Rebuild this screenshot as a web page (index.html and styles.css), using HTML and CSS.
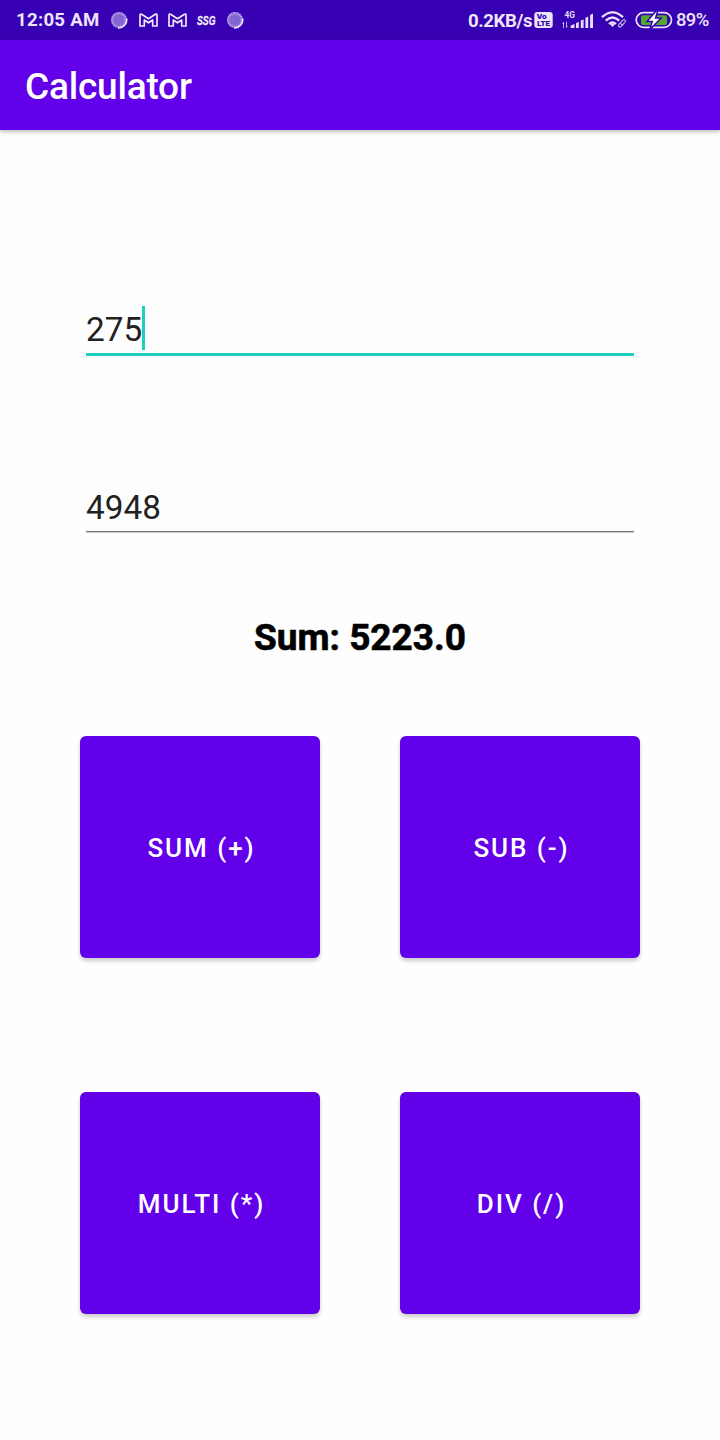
FILE: index.html
```html
<!DOCTYPE html>
<html lang="en">
<head>
<meta charset="utf-8">
<title>Calculator</title>
<link rel="stylesheet" href="styles.css">
</head>
<body>
<div class="status">
  <div class="status-left">
    <span class="clock">12:05 AM</span>
    <svg class="dot-icon" width="18" height="18" viewBox="0 0 18 18"><circle cx="9" cy="9" r="8" fill="#8264d3"/><circle cx="9" cy="9" r="6.8" fill="none" stroke="#b6a1e6" stroke-width="2.4" stroke-dasharray="1.2 .94"/><path d="M16.6 7.5A8 8 0 0 1 8 16.9" fill="none" stroke="#f0eafa" stroke-width="1.5"/></svg>
    <svg class="mail-icon" width="19" height="14" viewBox="0 0 19 14"><path d="M1 13V2.4Q1 .3 3 1.5L9.5 5.7L16 1.5Q18 .3 18 2.4V13H13.7V7L9.5 9.8L5.3 7V13Z" fill="none" stroke="#f0e9fb" stroke-width="1.7" stroke-linejoin="round"/></svg>
    <svg class="mail-icon second" width="19" height="14" viewBox="0 0 19 14"><path d="M1 13V2.4Q1 .3 3 1.5L9.5 5.7L16 1.5Q18 .3 18 2.4V13H13.7V7L9.5 9.8L5.3 7V13Z" fill="none" stroke="#f0e9fb" stroke-width="1.7" stroke-linejoin="round"/></svg>
    <svg class="ssg-icon" width="22" height="20" viewBox="0 0 22 20"><text x="1" y="14.8" class="ssg-text" textLength="18.5" lengthAdjust="spacingAndGlyphs">SSG</text></svg>
    <svg class="dot-icon last" width="18" height="18" viewBox="0 0 18 18"><circle cx="9" cy="9" r="8" fill="#8264d3"/><circle cx="9" cy="9" r="6.8" fill="none" stroke="#b6a1e6" stroke-width="2.4" stroke-dasharray="1.2 .94"/><path d="M16.6 7.5A8 8 0 0 1 8 16.9" fill="none" stroke="#f0eafa" stroke-width="1.5"/></svg>
  </div>
  <div class="status-right">
    <span class="speed">0.2KB/s</span>
    <svg class="volte" width="19" height="16" viewBox="0 0 19 16"><rect x=".3" width="18.4" height="16" rx="3" fill="#ebe4f8"/><text x="2.8" y="7.4" class="volte-text" textLength="10" lengthAdjust="spacingAndGlyphs">Vo</text><text x="3" y="14.4" class="volte-text" textLength="13" lengthAdjust="spacingAndGlyphs">LTE</text></svg>
    <svg class="signal" width="32" height="18" viewBox="0 0 32 18"><text x="2.5" y="7" class="net-text" textLength="10.5" lengthAdjust="spacingAndGlyphs">4G</text><g fill="#e7def7"><path d="M1.2 17V13H.2L2 10.8V17ZM5 10.8V15H6L4.2 17V10.8Z"/><path d="M8.7 17V14.5L12.5 13V17ZM14 12.2L16.8 10.8V17H14ZM18.8 9.6L21.6 8.4V17H18.8ZM23.4 6.8L26.2 5.5V17H23.4ZM28.1 4L31 2.6V17H28.1Z"/></g></svg>
    <svg class="wifi" width="26" height="18" viewBox="0 0 26 18"><g fill="none" stroke="#eae2f8" stroke-width="2.3"><path d="M1 6.2Q11.5-3.5 22 6.2"/><path d="M4.7 9.7Q11.5 3.3 18.3 9.7"/><path d="M8 13Q11.5 9.7 15 13"/></g><path d="M9 13.2Q11.5 11.5 14 13.2L11.5 16Z" fill="#eae2f8"/><g fill="#3700b3" stroke="#c5b3eb" stroke-width="1.1"><rect x="17" y="12.1" width="5.5" height="3" rx="1.5" transform="rotate(-45 19.7 13.6)"/><rect x="19.3" y="9.7" width="5.5" height="3" rx="1.5" transform="rotate(-45 22 11.2)"/></g></svg>
    <svg class="battery" width="38" height="18" viewBox="0 0 38 18"><rect x="1.2" y="1.7" width="35.3" height="14.6" rx="7.3" fill="none" stroke="#e8dff8" stroke-width="1.7"/><rect x="6" y="4.2" width="26" height="9.7" rx="2" fill="#51a92d"/><path d="M21.4-.5L12 10.6H17.2L14.9 18.5L26.2 7H20.6L22.8-.5Z" fill="#fff" stroke="#3700b3" stroke-width="1.5"/></svg>
    <span class="percent">89%</span>
  </div>
</div>
<header class="appbar"><h1 class="title">Calculator</h1></header>
<main class="content">
  <div class="field focused"><span class="value">275</span><span class="caret"></span></div>
  <div class="field idle"><span class="value">4948</span></div>
  <p class="result">Sum: 5223.0</p>
  <div class="keys">
    <button class="key">SUM (+)</button>
    <button class="key">SUB (-)</button>
    <button class="key">MULTI (*)</button>
    <button class="key">DIV (/)</button>
  </div>
</main>
</body>
</html>
```
FILE: styles.css
```css
* { box-sizing: border-box; }
body { margin: 0; width: 720px; height: 1440px; overflow: hidden; background: #fefefe; font-family: Roboto, sans-serif; }
.status { height: 40px; background: #3700b3; color: #ede5fa; display: flex; justify-content: space-between; align-items: center; padding: 0 11px 0 16px; }
.status-left, .status-right { display: flex; align-items: center; height: 40px; }
.status svg { display: block; flex: none; overflow: visible; }
.clock, .speed, .percent { font-size: 18.6px; line-height: 40px; white-space: nowrap; }
.clock { font-weight: 700; width: 84px; letter-spacing: .28px; }
.speed { font-weight: 700; width: 64px; letter-spacing: -.4px; padding-top: 1px; }
.percent { font-weight: 500; font-size: 18.4px; width: 33px; margin-left: 3px; letter-spacing: -.6px; }
.dot-icon { margin-left: 10px; }
.mail-icon { margin-left: 11px; }
.mail-icon.second { margin-left: 10px; }
.ssg-icon { margin-left: 9px; }
.dot-icon.last { margin-left: 8px; }
.ssg-text { font: italic 700 13.5px "Liberation Sans", sans-serif; fill: #f4effc; stroke: #f4effc; stroke-width: .3px; }
.volte { margin-left: 2px; }
.volte-text { font: 900 8px Roboto, sans-serif; fill: #3700b3; }
.net-text { font: 700 8.5px Roboto, sans-serif; fill: #e7def7; }
.signal { margin-left: 9px; }
.wifi { margin-left: 7px; }
.battery { margin-left: 8px; }
.appbar { position: relative; height: 90px; background: #6200ea; color: #fff; display: flex; align-items: center; padding: 4px 25px 0; box-shadow: 0 2px 4px rgba(0,0,0,.25); }
.title { margin: 0; font-size: 37px; font-weight: 500; line-height: 44px; letter-spacing: -.2px; }
.content { padding: 170px 80px 0; }
.field { margin: 0 6px; height: 56px; display: flex; align-items: flex-start; color: #212121; font-size: 33.3px; line-height: 60px; }
.focused { border-bottom: 3px solid #1dcfbd; }
.caret { width: 3px; height: 44px; margin-top: 6px; background: #1dcfbd; }
.idle { margin-top: 122px; height: 54px; border-bottom: 1px solid #777; box-shadow: 0 1px 0 #ccc; }
.result { margin: 84px 0 0; font-size: 37px; font-weight: 700; line-height: 44px; text-align: center; color: #000; -webkit-text-stroke: .6px #000; }
.keys { margin-top: 76px; display: grid; grid-template-columns: 240px 240px; grid-auto-rows: 222px; gap: 134px 80px; }
.key { border: 0; border-radius: 6px; padding: 2px 0 0 3px; background: #6200ea; color: #fff; font: 500 26px Roboto, sans-serif; letter-spacing: 1.95px; box-shadow: 0 3px 4px rgba(0,0,0,.2); }
```
